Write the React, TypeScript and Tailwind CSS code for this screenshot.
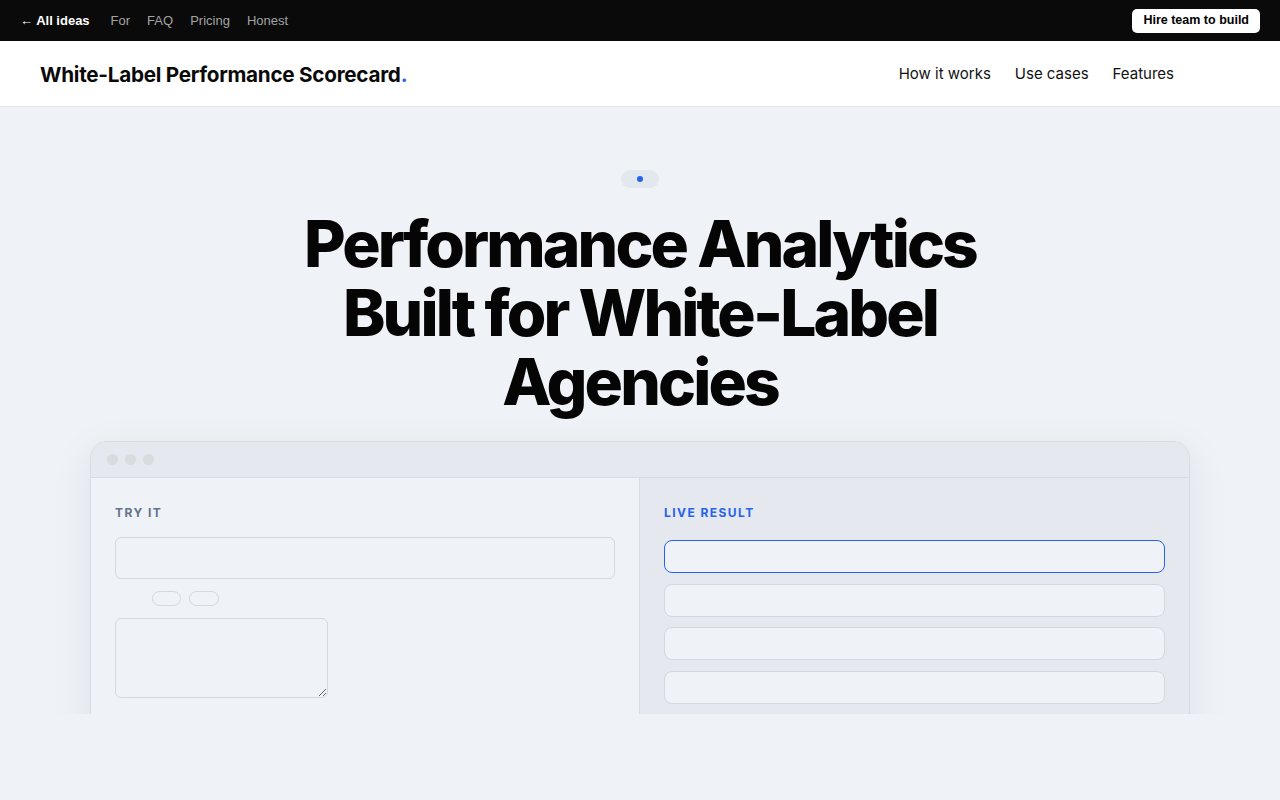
export default function App() {
  const sans = "font-['Inter','Liberation_Sans',sans-serif]";
  return (
    <div className={`min-h-screen bg-[#eff2f7] ${sans}`}>
      {/* top strip */}
      <div className="h-[41px] bg-[#0a0a0a] flex items-center justify-between px-5 font-['Liberation_Sans',Arial,sans-serif] text-[13px]">
        <div className="flex items-center gap-[17px]">
          <a className="text-white font-bold mr-[4px]">← All ideas</a>
          <a className="text-[#a3a3a3]">For</a>
          <a className="text-[#a3a3a3]">FAQ</a>
          <a className="text-[#a3a3a3]">Pricing</a>
          <a className="text-[#a3a3a3]">Honest</a>
        </div>
        <button className="bg-white text-black font-bold text-[12.5px] rounded-[5px] h-6 px-[11px]">Hire team to build</button>
      </div>

      {/* header */}
      <header className="h-[66px] bg-white border-b border-[#e2e5ea] flex items-center justify-between pl-10 pr-[106px] pt-[2px]">
        <div className="text-[20.7px] font-bold tracking-[-0.013em] text-[#0a0a0a]">
          White-Label Performance Scorecard<span className="text-[#2563eb]">.</span>
        </div>
        <nav className="flex items-center gap-6 text-[15px] text-[#111]">
          <a>How it works</a>
          <a>Use cases</a>
          <a>Features</a>
        </nav>
      </header>

      {/* hero */}
      <section className="h-[607px] overflow-hidden flex flex-col items-center pt-[63px]">
        <div className="shrink-0 w-[38px] h-[18px] rounded-full bg-[#e3e7ee] flex items-center justify-center">
          <span className="w-[6px] h-[6px] rounded-full bg-[#2563eb]" />
        </div>
        <h1 className="shrink-0 mt-[21px] max-w-[720px] text-center text-[64px] leading-[69px] font-extrabold tracking-[-0.045em] text-[#050505]">
          Performance Analytics Built for White-Label Agencies
        </h1>

        {/* app window */}
        <div className="mt-[25px] w-[1100px] shrink-0 rounded-t-[16px] border border-[#d8dbe0] shadow-[0_10px_40px_rgba(15,23,42,0.08)] overflow-hidden">
          <div className="h-9 bg-[#e5e8ee] border-b border-[#d8dbe0] flex items-center gap-[7px] px-4">
            <span className="w-[11px] h-[11px] rounded-full bg-[#d9dbdf]" />
            <span className="w-[11px] h-[11px] rounded-full bg-[#d9dbdf]" />
            <span className="w-[11px] h-[11px] rounded-full bg-[#d9dbdf]" />
          </div>
          <div className="grid grid-cols-2 h-[360px]">
            <div className="bg-[#eff2f7] px-6 pt-[26px] border-r border-[#d8dbe0]">
              <div className="text-[12px] font-bold tracking-[0.12em] text-[#64748b]">TRY IT</div>
              <div className="mt-[15px] h-[42px] rounded-[6px] border border-[#d4d7dd]" />
              <div className="mt-3 flex gap-2 pl-[37px]">
                <span className="w-[29px] h-[15px] rounded-full border border-[#d4d7dd]" />
                <span className="w-[30px] h-[15px] rounded-full border border-[#d4d7dd]" />
              </div>
              <textarea className="mt-3 block w-[213px] h-[80px] rounded-[6px] border border-[#d4d7dd] bg-transparent" />
            </div>
            <div className="bg-[#e5e8ee] px-6 pt-[26px]">
              <div className="text-[12px] font-bold tracking-[0.12em] text-[#2563eb]">LIVE RESULT</div>
              <div className="mt-[18px] flex flex-col gap-[10.5px]">
                <div className="h-[33px] rounded-[8px] border border-[#2563eb] bg-[#eff2f7]" />
                <div className="h-[33px] rounded-[8px] border border-[#d4d7dd] bg-[#eff2f7]" />
                <div className="h-[33px] rounded-[8px] border border-[#d4d7dd] bg-[#eff2f7]" />
                <div className="h-[33px] rounded-[8px] border border-[#d4d7dd] bg-[#eff2f7]" />
              </div>
            </div>
          </div>
        </div>
      </section>
    </div>
  );
}
